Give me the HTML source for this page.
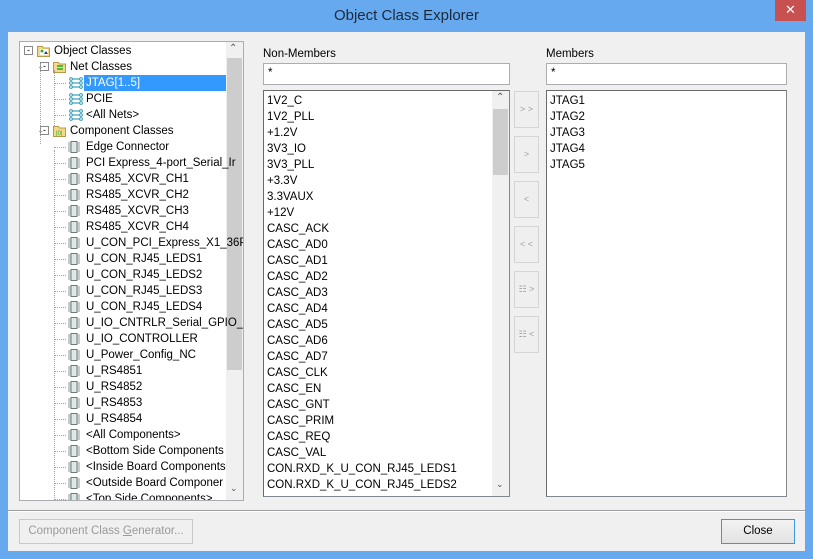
<!DOCTYPE html>
<html><head><meta charset="utf-8"><style>
*{margin:0;padding:0;box-sizing:border-box}
body{width:813px;height:559px;overflow:hidden;background:#67a9ef;font-family:"Liberation Sans",sans-serif;font-size:11.5px;color:#000;position:relative}
.a{position:absolute}
.title{left:0;top:7px;width:813px;text-align:center;font-size:15px;color:#1b2a3a}
.xbtn{left:775px;top:0;width:31px;height:21px;background:#c75050;color:#fff;text-align:center;font-size:13px;line-height:20px}
.client{left:8px;top:32px;width:797px;height:519px;background:#f0f0f0}
.box{background:#fff;border:1px solid #abadb3}
.list{background:#fff;border:1px solid #828790;border-top-color:#6a6a6a;border-left-color:#6a6a6a}
.row{position:absolute;height:16px;line-height:16px;white-space:nowrap}
.sb{background:#f0f0f0}
.thumb{background:#cdcdcd}
.btn{border:1px solid #d5d5d5;background:#efefef;color:#a0a0a0;text-align:center;font-size:9px}
.dot{position:absolute;border-color:#a0a0a0;border-style:dotted;border-width:0}
.chip{position:absolute;width:12px;height:12px}
</style></head><body>
<div class="a title">Object Class Explorer</div>
<div class="a xbtn">✕</div>
<div class="a client"></div>

<!-- tree -->
<div class="a box" style="left:19px;top:41px;width:225px;height:460px;overflow:hidden">
 <div class="a sb" style="left:206px;top:0;width:17px;height:458px"></div>
 <div class="a thumb" style="left:207px;top:16px;width:15px;height:312px"></div>
 <div class="a" style="left:209px;top:1px;font-size:10px;color:#555">⌃</div>
 <div class="a" style="left:210px;top:441px;font-size:9px;color:#555">⌄</div>
 <div class="a" style="left:64px;top:33px;width:142px;height:16px;background:#3399ff"></div>
 <div id="tree"></div>
</div>

<div class="a" style="left:263px;top:48px">Non-Members</div>
<div class="a box" style="left:263px;top:63px;width:247px;height:22px;padding:3px 4px">*</div>
<div class="a list" style="left:263px;top:90px;width:247px;height:407px;overflow:hidden">
 <div class="a sb" style="left:228px;top:0;width:17px;height:405px"></div>
 <div class="a thumb" style="left:229px;top:18px;width:15px;height:66px"></div>
 <div class="a" style="left:232px;top:1px;font-size:10px;color:#555">⌃</div>
 <div class="a" style="left:232px;top:388px;font-size:9px;color:#555">⌄</div>
 <div id="nm"></div>
</div>

<div class="a btn" style="left:514px;top:91px;width:25px;height:37px;line-height:35px">&gt; &gt;</div>
<div class="a btn" style="left:514px;top:136px;width:25px;height:37px;line-height:35px">&gt;</div>
<div class="a btn" style="left:514px;top:181px;width:25px;height:37px;line-height:35px">&lt;</div>
<div class="a btn" style="left:514px;top:226px;width:25px;height:37px;line-height:35px">&lt; &lt;</div>
<div class="a btn" style="left:514px;top:271px;width:25px;height:37px;line-height:35px">☷ &gt;</div>
<div class="a btn" style="left:514px;top:316px;width:25px;height:37px;line-height:35px">☷ &lt;</div>

<div class="a" style="left:546px;top:48px">Members</div>
<div class="a box" style="left:546px;top:63px;width:241px;height:22px;padding:3px 4px">*</div>
<div class="a list" style="left:546px;top:90px;width:241px;height:407px">
 <div class="row" style="left:3px;top:2px">JTAG1</div>
 <div class="row" style="left:3px;top:18px">JTAG2</div>
 <div class="row" style="left:3px;top:34px">JTAG3</div>
 <div class="row" style="left:3px;top:50px">JTAG4</div>
 <div class="row" style="left:3px;top:66px">JTAG5</div>
</div>

<div class="a" style="left:8px;top:510px;width:797px;height:1px;background:#a0a0a0"></div>
<div class="a" style="left:8px;top:511px;width:797px;height:1px;background:#fff"></div>
<div class="a" style="left:19px;top:519px;width:174px;height:25px;border:1px solid #c8c8c8;background:#f0f0f0;color:#9a9a9a;text-align:center;line-height:23px">Component Class <u>G</u>enerator...</div>
<div class="a" style="left:721px;top:519px;width:74px;height:25px;border:1px solid #3c98e0;background:linear-gradient(#f2f2f2,#e3e3e3);text-align:center;line-height:23px">Close</div>

<script>
var nm=["1V2_C","1V2_PLL","+1.2V","3V3_IO","3V3_PLL","+3.3V","3.3VAUX","+12V","CASC_ACK","CASC_AD0","CASC_AD1","CASC_AD2","CASC_AD3","CASC_AD4","CASC_AD5","CASC_AD6","CASC_AD7","CASC_CLK","CASC_EN","CASC_GNT","CASC_PRIM","CASC_REQ","CASC_VAL","CON.RXD_K_U_CON_RJ45_LEDS1","CON.RXD_K_U_CON_RJ45_LEDS2"];
var h="";nm.forEach(function(t,i){h+='<div class="row" style="left:3px;top:'+(2+i*16)+'px">'+t+'</div>'});
document.getElementById("nm").innerHTML=h;
function esc(s){return s.replace(/</g,"&lt;").replace(/>/g,"&gt;")}
var chip='<svg class="chip" viewBox="0 0 12 12"><rect x="3" y="0.5" width="6" height="11" fill="#dfe8e6" stroke="#6d7a78"/><path d="M0 2h3M0 4h3M0 6h3M0 8h3M0 10h3M9 2h3M9 4h3M9 6h3M9 8h3M9 10h3" stroke="#8a9898"/></svg>';
var net='<svg class="chip" viewBox="0 0 14 12" style="width:16px"><path d="M1 2h12M1 6h12M1 10h12" stroke="#5bb6c8" stroke-width="1.6"/><circle cx="2" cy="2" r="1.4" fill="#fff" stroke="#3a9fb5"/><circle cx="12" cy="2" r="1.4" fill="#fff" stroke="#3a9fb5"/><circle cx="2" cy="6" r="1.4" fill="#fff" stroke="#3a9fb5"/><circle cx="12" cy="6" r="1.4" fill="#fff" stroke="#3a9fb5"/><circle cx="2" cy="10" r="1.4" fill="#fff" stroke="#3a9fb5"/><circle cx="12" cy="10" r="1.4" fill="#fff" stroke="#3a9fb5"/></svg>';
function folder(inner){return '<svg class="chip" viewBox="0 0 14 12" style="width:14px"><path d="M0.5 1.5h5l1 1.5h6v8.5h-12z" fill="#f5d98b" stroke="#b89a4a"/>'+inner+'</svg>'}
var tree=[];
var y=1;
function add(lvl,icon,text,sel){tree.push({lvl:lvl,icon:icon,text:text,y:y,sel:sel});y+=16}
add(0,folder('<rect x="3" y="4" width="8" height="6" fill="#fff"/><circle cx="5" cy="6" r="1.5" fill="#3a3"/><path d="M7 9l2-3 2 3z" fill="#33a"/>'),"Object Classes");
add(1,folder('<path d="M4 5h6M4 8h6" stroke="#2a2" stroke-width="1.5"/>'),"Net Classes");
add(2,net,"JTAG[1..5]",1);add(2,net,"PCIE");add(2,net,"<All Nets>");
add(1,folder('<text x="3" y="10" font-size="6" fill="#2a2" font-family="Liberation Sans">|0|</text>'),"Component Classes");
["Edge Connector","PCI Express_4-port_Serial_Ir","RS485_XCVR_CH1","RS485_XCVR_CH2","RS485_XCVR_CH3","RS485_XCVR_CH4","U_CON_PCI_Express_X1_36P","U_CON_RJ45_LEDS1","U_CON_RJ45_LEDS2","U_CON_RJ45_LEDS3","U_CON_RJ45_LEDS4","U_IO_CNTRLR_Serial_GPIO_I","U_IO_CONTROLLER","U_Power_Config_NC","U_RS4851","U_RS4852","U_RS4853","U_RS4854","<All Components>","<Bottom Side Components","<Inside Board Components","<Outside Board Componer","<Top Side Components>"].forEach(function(t){add(2,chip,t)});
var h2="";
tree.forEach(function(n){
 var ix=[17,33,48][n.lvl], tx=[34,50,66][n.lvl];
 if(n.lvl<2) h2+='<div class="a" style="left:'+(ix-13)+'px;top:'+(n.y+3)+'px;width:9px;height:9px;border:1px solid #888;background:#fff;font-size:9px;line-height:6px;text-align:center">-</div>';
 else h2+='<div class="dot" style="left:'+(ix-14)+'px;top:'+(n.y+8)+'px;width:12px;border-top-width:1px"></div>';
 if(n.lvl==1) h2+='<div class="dot" style="left:'+(ix-14)+'px;top:'+(n.y+8)+'px;width:3px;border-top-width:1px"></div>';
 h2+='<div class="a" style="left:'+ix+'px;top:'+(n.y+2)+'px">'+n.icon+'</div>';
 h2+='<div class="row" style="left:'+tx+'px;top:'+n.y+'px;'+(n.sel?'color:#fff':'')+'">'+esc(n.text)+'</div>';
});
h2+='<div class="dot" style="left:20px;top:22px;height:80px;border-left-width:1px"></div>';
h2+='<div class="dot" style="left:34px;top:28px;height:56px;border-left-width:1px"></div>';
h2+='<div class="dot" style="left:34px;top:108px;height:360px;border-left-width:1px"></div>';
document.getElementById("tree").innerHTML=h2;
</script>
</body></html>
